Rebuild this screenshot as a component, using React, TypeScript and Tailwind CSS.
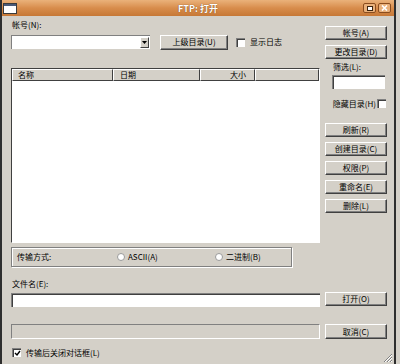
import type { ReactNode } from 'react';

const FONT = { fontFamily: '"Noto Sans CJK SC", "Liberation Sans", sans-serif' };

function Btn({ children, h = 'h-[14px]' }: { children: ReactNode; h?: string }) {
  return (
    <div
      className={`${h} w-[62px] flex items-center justify-center border-t border-l border-white border-b border-r border-b-[#404040] border-r-[#404040] shadow-[inset_-1px_-1px_0_#808080] text-[8px] leading-none text-black`}
    >
      {children}
    </div>
  );
}

function CheckBox({ checked = false }: { checked?: boolean }) {
  return (
    <div className="w-[9px] h-[9px] bg-white border-t border-l border-[#808080] border-b-white border-r-white shadow-[inset_1px_1px_0_#404040] flex items-center justify-center shrink-0">
      {checked && (
        <svg width="7" height="7" viewBox="0 0 7 7">
          <path d="M1 3 L3 5 L6 1" fill="none" stroke="#000" strokeWidth="1.4" />
        </svg>
      )}
    </div>
  );
}

function Radio() {
  return (
    <svg width="8" height="8" viewBox="0 0 8 8" className="shrink-0">
      <circle cx="4" cy="4" r="3.5" fill="#fff" stroke="#9a9a9a" strokeWidth="1" />
    </svg>
  );
}

export default function App() {
  return (
    <div className="w-[400px] h-[364px] bg-[#d4d0c8] overflow-hidden" style={FONT}>
      <div className="relative w-[396px] h-[364px] border-x-2 border-[#2e2e2e] bg-[#d4d0c8]">
        {/* title bar */}
        <div className="h-[16px] grid grid-cols-[1fr_auto_1fr] items-center bg-gradient-to-b from-[#eab27a] via-[#d88d4c] to-[#c67836]">
          <div className="pl-[1px]">
            <svg width="14" height="11" viewBox="0 0 14 11">
              <rect x="0.5" y="0.5" width="13" height="10" fill="#fff" stroke="#3b3b3b" />
              <rect x="1" y="1" width="12" height="2" fill="#4a5a78" />
            </svg>
          </div>
          <div className="text-[9px] font-bold text-white leading-none [text-shadow:0_0_1px_#5a2c00]">FTP: 打开</div>
          <div className="flex justify-end gap-[2px] pr-[3px]">
            <div className="w-[13px] h-[10px] rounded-[2px] border border-[#8a4d1e] bg-[#e9b07a] flex items-center justify-center">
              <div className="w-[6px] h-[5px] border border-[#3a2410] bg-white" />
            </div>
            <div className="w-[13px] h-[10px] rounded-[2px] border border-[#8a4d1e] bg-[#e9b07a] flex items-center justify-center">
              <svg width="7" height="6" viewBox="0 0 7 6">
                <path d="M1 0.5 L6 5.5 M6 0.5 L1 5.5" stroke="#fff" strokeWidth="1.6" />
              </svg>
            </div>
          </div>
        </div>

        {/* body */}
        <div className="pl-[9px] text-[8px] leading-none text-black">
          <div className="flex h-[251px]">
            {/* left column */}
            <div className="w-[309px] flex flex-col">
              <div className="mt-[4px] h-[10px] flex items-center pl-[1px]">帐号(N):</div>
              <div className="mt-[5px] h-[14px] flex items-center">
                <div className="w-[139px] h-[14px] bg-white border-t border-l border-[#808080] border-b-white border-r-white flex justify-end items-center pr-[1px]">
                  <div className="w-[9px] h-[11px] bg-[#d4d0c8] border-t border-l border-white border-b border-r border-b-[#404040] border-r-[#404040] flex items-center justify-center">
                    <svg width="5" height="3" viewBox="0 0 5 3">
                      <path d="M0 0 H5 L2.5 3 Z" fill="#000" />
                    </svg>
                  </div>
                </div>
                <div className="ml-[10px] w-[68px] h-[15px] flex items-center justify-center border-t border-l border-white border-b border-r border-b-[#404040] border-r-[#404040] shadow-[inset_-1px_-1px_0_#808080]">
                  上级目录(U)
                </div>
                <div className="ml-[8px]">
                  <CheckBox />
                </div>
                <div className="ml-[5px]">显示日志</div>
              </div>

              {/* file list */}
              <div className="mt-[19px] h-[175px] bg-white border-t border-l border-[#404040] border-b border-r border-b-white border-r-white flex flex-col">
                <div className="h-[12px] flex bg-[#d4d0c8]">
                  <div className="w-[101px] flex items-center pl-[5px] border-t border-l border-white border-b border-r border-b-[#404040] border-r-[#404040]">名称</div>
                  <div className="w-[87px] flex items-center pl-[6px] border-t border-l border-white border-b border-r border-b-[#404040] border-r-[#404040]">日期</div>
                  <div className="w-[55px] flex items-center justify-end pr-[8px] border-t border-l border-white border-b border-r border-b-[#404040] border-r-[#404040]">大小</div>
                  <div className="flex-1 border-t border-l border-white border-b border-r border-b-[#404040] border-r-[#404040]" />
                </div>
                <div className="flex-1" />
              </div>

              {/* transfer mode */}
              <div className="mt-[4px] h-[20px] w-[281px] border border-[#808080] shadow-[inset_1px_1px_0_#fff,1px_1px_0_#fff] flex items-center">
                <div className="w-[105px] pl-[5px]">传输方式:</div>
                <Radio />
                <div className="ml-[3px] w-[87px]">ASCII(A)</div>
                <Radio />
                <div className="ml-[3px]">二进制(B)</div>
              </div>
            </div>

            {/* right column */}
            <div className="ml-[5px] w-[62px] flex flex-col">
              <div className="mt-[10px]">
                <Btn>帐号(A)</Btn>
              </div>
              <div className="mt-[5px]">
                <Btn>更改目录(D)</Btn>
              </div>
              <div className="mt-[3px] h-[10px] flex items-center pl-[8px]">筛选(L):</div>
              <div className="mt-[3px] ml-[7px] w-[53px] h-[14px] bg-white border-t border-l border-[#808080] border-b-white border-r-white shadow-[inset_1px_1px_0_#404040]" />
              <div className="mt-[10px] h-[9px] flex items-center justify-end gap-[1px] pr-[1px]">
                <span>隐藏目录(H)</span>
                <CheckBox />
              </div>
              <div className="mt-[15px] flex flex-col gap-[5px]">
                <Btn>刷新(R)</Btn>
                <Btn>创建目录(C)</Btn>
                <Btn>权限(P)</Btn>
                <Btn>重命名(E)</Btn>
                <Btn>删除(L)</Btn>
              </div>
            </div>
          </div>

          {/* bottom */}
          <div className="mt-[12px] h-[10px] flex items-center pl-[1px]">文件名(E):</div>
          <div className="mt-[4px] flex items-start">
            <div className="w-[309px] h-[14px] bg-white border-t border-l border-[#808080] border-b-white border-r-white shadow-[inset_1px_1px_0_#404040]" />
            <div className="ml-[5px] -mt-[1px]">
              <Btn>打开(O)</Btn>
            </div>
          </div>
          <div className="mt-[17px] flex items-start">
            <div className="w-[309px] h-[15px] border-t border-l border-[#808080] border-b border-r border-b-white border-r-white" />
            <div className="ml-[5px]">
              <Btn h="h-[15px]">取消(C)</Btn>
            </div>
          </div>
          <div className="mt-[9px] h-[9px] flex items-center pl-[1px]">
            <CheckBox checked />
            <span className="ml-[5px]">传输后关闭对话框(L)</span>
          </div>
        </div>

        {/* resize grip */}
        <svg className="absolute right-[1px] bottom-[1px]" width="11" height="11" viewBox="0 0 11 11">
          <path d="M10 2 L2 10 M10 5 L5 10 M10 8 L8 10" stroke="#808080" strokeWidth="1" />
          <path d="M10 3 L3 10 M10 6 L6 10 M10 9 L9 10" stroke="#fff" strokeWidth="1" />
        </svg>
      </div>
    </div>
  );
}
